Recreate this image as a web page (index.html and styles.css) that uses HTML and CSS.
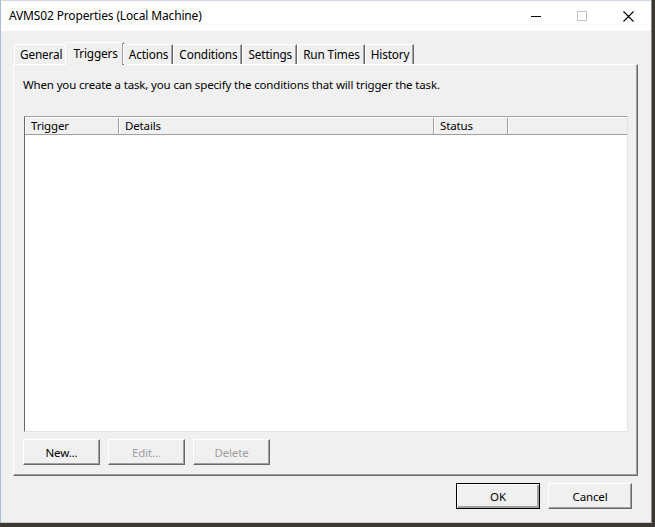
FILE: index.html
```html
<!DOCTYPE html>
<html lang="en">
  <head>
    <meta charset="UTF-8" />
    <meta name="viewport" content="width=device-width, initial-scale=1.0" />
    <title>AVMS02 Properties (Local Machine)</title>
    <link rel="stylesheet" href="styles.css">
  </head>
  <body>
    <div class="window">
      <!-- Title bar -->
      <div class="titlebar">
        <span class="title">AVMS02 Properties (Local Machine)</span>
        <div class="caption-buttons">
          <span class="cap-btn">
            <svg width="10" height="10" viewBox="0 0 10 10"><path d="M0 5.5h10" stroke="#000" stroke-width="1"/></svg>
          </span>
          <span class="cap-btn">
            <svg width="10" height="10" viewBox="0 0 10 10"><rect x="0.5" y="0.5" width="9" height="9" fill="none" stroke="#c4c4c4"/></svg>
          </span>
          <span class="cap-btn">
            <svg width="11" height="11" viewBox="0 0 11 11"><path d="M0.5 0.5l10 10M10.5 0.5l-10 10" stroke="#000" stroke-width="1.1"/></svg>
          </span>
        </div>
      </div>

      <div class="client">
        <!-- Tabs -->
        <div class="tabs">
          <span class="tab">General</span>
          <span class="tab active">Triggers</span>
          <span class="tab">Actions</span>
          <span class="tab">Conditions</span>
          <span class="tab">Settings</span>
          <span class="tab">Run Times</span>
          <span class="tab">History</span>
        </div>

        <div class="panel">
          <p class="intro">When you create a task, you can specify the conditions that will trigger the task.</p>

          <div class="listview">
            <div class="header">
              <span class="col col-trigger">Trigger</span>
              <span class="col col-details">Details</span>
              <span class="col col-status">Status</span>
              <span class="col col-rest"></span>
            </div>
          </div>

          <div class="row-buttons">
            <button class="btn">New...</button>
            <button class="btn" disabled>Edit...</button>
            <button class="btn" disabled>Delete</button>
          </div>
        </div>

        <div class="footer">
          <button class="btn btn-wide default">OK</button>
          <button class="btn btn-wide">Cancel</button>
        </div>
      </div>
    </div>
  </body>
</html>
```

FILE: styles.css
```css
body {
  margin: 0;
  padding: 0;
  background-color: #3b3733;
  font-family: "Noto Sans", "Open Sans", sans-serif;
  font-size: 11.5px;
  letter-spacing: -0.15px;
  color: #000;
  width: 655px;
  height: 527px;
  overflow: hidden;
}

.window {
  width: 650px;
  height: 522px;
  background-color: #f0f0f0;
  border-left: 1px solid #a9bcd6;
  border-right: 1px solid #8a8a8a;
  border-bottom: 1px solid #c8c8c8;
  display: flex;
  flex-direction: column;
}

.titlebar {
  height: 31px;
  background-color: #fff;
  display: flex;
  align-items: center;
  padding-left: 8px;
  border-top: 1px solid #d0d8e4;
  box-sizing: border-box;
}

.title {
  flex: 1;
  font-size: 12px;
  margin-top: -1px;
}

.caption-buttons {
  display: flex;
  height: 100%;
}

.cap-btn {
  width: 46px;
  display: flex;
  align-items: center;
  justify-content: center;
}

.client {
  flex: 1;
  display: flex;
  flex-direction: column;
  padding: 11px 13px 0 12px;
}

.tabs {
  display: flex;
  align-items: flex-end;
  height: 22px;
  padding-left: 1px;
  position: relative;
  z-index: 1;
}

.tab {
  height: 20px;
  box-sizing: border-box;
  padding: 0 4px 0 5px;
  border-top: 1px solid #fff;
  border-left: 1px solid #fff;
  border-right: 1px solid #696969;
  line-height: 19px;
  font-size: 11.8px;
  background-color: #f0f0f0;
  box-shadow: inset -1px 0 0 #a0a0a0;
}

.tab.active {
  height: 23px;
  margin-bottom: -1px;
  margin-left: -2px;
  margin-right: -1px;
  padding: 0 5px 0 7px;
  line-height: 20px;
}

.panel {
  height: 412px;
  box-sizing: border-box;
  border-top: 1px solid #fff;
  border-left: 1px solid #fff;
  border-right: 1px solid #696969;
  border-bottom: 1px solid #696969;
  box-shadow: inset -1px -1px 0 #a0a0a0;
  padding: 12px 9px 0 9px;
  display: flex;
  flex-direction: column;
}

.intro {
  margin: 0;
  line-height: 16px;
}

.listview {
  margin-top: 23px;
  margin-left: 1px;
  height: 316px;
  box-sizing: border-box;
  background-color: #fff;
  border-top: 1px solid #a0a0a0;
  border-left: 1px solid #696969;
  border-right: 1px solid #e3e3e3;
  border-bottom: 1px solid #e3e3e3;
}

.header {
  display: flex;
  height: 18px;
  border-top: 1px solid #fff;
  border-bottom: 1px solid #a0a0a0;
  box-sizing: border-box;
  background-color: #f0f0f0;
}

.col {
  box-sizing: border-box;
  padding-left: 6px;
  line-height: 16px;
  border-right: 1px solid #a0a0a0;
  box-shadow: inset 1px 0 0 #fff;
}

.col-trigger {
  width: 94px;
}

.col-details {
  width: 315px;
}

.col-status {
  width: 74px;
}

.col-rest {
  flex: 1;
  border-right: none;
}

.row-buttons {
  display: flex;
  gap: 8px;
  margin-top: 7px;
}

.btn {
  width: 77px;
  height: 26px;
  box-sizing: border-box;
  font-family: inherit;
  font-size: 11.5px;
  letter-spacing: -0.15px;
  color: #000;
  background-color: #f0f0f0;
  border-top: 1px solid #fff;
  border-left: 1px solid #fff;
  border-right: 1px solid #696969;
  border-bottom: 1px solid #696969;
  box-shadow: inset -1px -1px 0 #a0a0a0;
  padding: 0;
}

.btn:disabled {
  color: #a0a0a0;
}

.footer {
  display: flex;
  justify-content: flex-end;
  gap: 8px;
  margin-top: 7px;
  padding-right: 6px;
}

.btn-wide {
  width: 84px;
}

.btn.default {
  border: 1px solid #000;
  box-shadow: inset 1px 1px 0 #fff, inset -2px -2px 0 #a0a0a0;
}
```
